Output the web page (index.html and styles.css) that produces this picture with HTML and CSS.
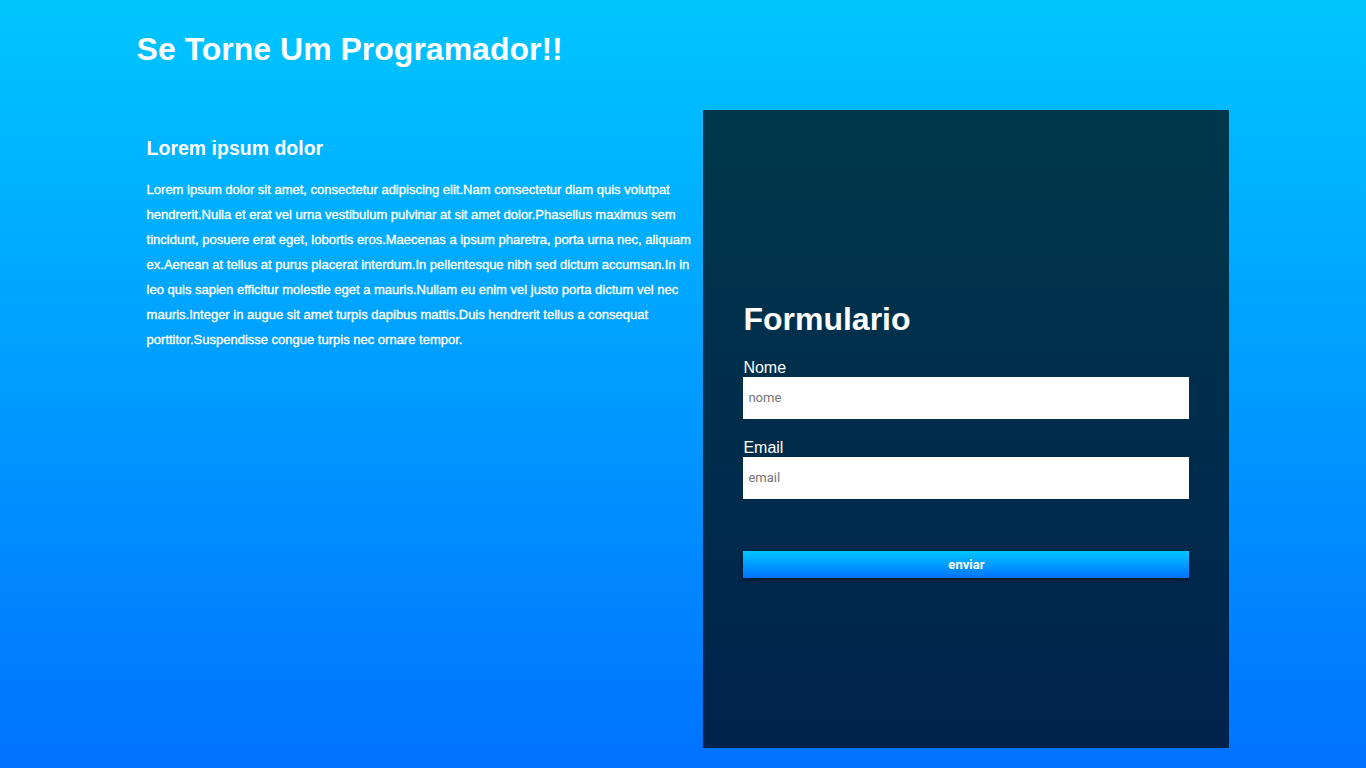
FILE: index.html
```html
<!DOCTYPE html>
<html lang="pt">
<head>
<meta charset="utf-8">
<title>Se Torne Um Programador!!</title>
<link rel="stylesheet" href="styles.css">
</head>
<body>
<div class="page">
  <header class="header">
    <h1 class="title">Se Torne Um Programador!!</h1>
  </header>
  <main class="content">
    <section class="about">
      <h2 class="about-title">Lorem ipsum dolor</h2>
      <p class="about-text">Lorem ipsum dolor sit amet, consectetur adipiscing elit.Nam consectetur diam quis volutpat hendrerit.Nulla et erat vel urna vestibulum pulvinar at sit amet dolor.Phasellus maximus sem tincidunt, posuere erat eget, lobortis eros.Maecenas a ipsum pharetra, porta urna nec, aliquam ex.Aenean at tellus at purus placerat interdum.In pellentesque nibh sed dictum accumsan.In in leo quis sapien efficitur molestie eget a mauris.Nullam eu enim vel justo porta dictum vel nec mauris.Integer in augue sit amet turpis dapibus mattis.Duis hendrerit tellus a consequat porttitor.Suspendisse congue turpis nec ornare tempor.</p>
    </section>
    <aside class="panel">
      <form class="form">
        <h1 class="form-title">Formulario</h1>
        <label class="label" for="nome">Nome</label>
        <input class="input" id="nome" type="text" placeholder="nome">
        <label class="label label-gap" for="email">Email</label>
        <input class="input" id="email" type="email" placeholder="email">
        <button class="button" type="button">enviar</button>
      </form>
    </aside>
  </main>
</div>
</body>
</html>
```

FILE: styles.css
```css
html, body {
  margin: 0;
  padding: 0;
}

body {
  font-family: "Liberation Sans", Arial, sans-serif;
  color: #fff;
  background: linear-gradient(to bottom, #00c6ff, #0072ff);
  min-height: 100vh;
}

.page {
  width: 80%;
  margin: 0 auto;
  min-height: 100vh;
  display: flex;
  flex-direction: column;
  box-sizing: border-box;
  padding-bottom: 20px;
}

.header {
  height: 110px;
  padding-top: 31px;
  box-sizing: border-box;
}

.title {
  margin: 0;
  font-size: 32px;
  font-weight: bold;
}

.content {
  flex: 1;
  display: grid;
  grid-template-columns: 1fr 526px;
}

.about {
  padding: 10px;
}

.about-title {
  margin: 17px 0 0;
  font-size: 19.5px;
  font-weight: bold;
  line-height: 23px;
}

.about-text {
  margin: 17px 0 0;
  font-family: "Liberation Sans", Arial, sans-serif;
  font-size: 13px;
  font-weight: normal;
  line-height: 25px;
  -webkit-text-stroke: 0.35px #fff;
}

.panel {
  background: rgba(0, 0, 0, 0.7);
  padding: 0 40px;
  display: flex;
  flex-direction: column;
  justify-content: center;
}

.form {
  display: flex;
  flex-direction: column;
}

.form-title {
  font-size: 32px;
  font-weight: bold;
  line-height: 37px;
  margin: 20.44px 0 21.44px;
}

.label {
  font-size: 16px;
  line-height: 18px;
}

.label-gap {
  margin-top: 20px;
}

.input {
  height: 42px;
  box-sizing: border-box;
  border: none;
  outline: none;
  padding: 0 5px;
  font-family: Roboto, "Liberation Sans", sans-serif;
  font-size: 13px;
  color: #333;
  background: #fff;
}

.input::placeholder {
  color: #757575;
}

.button {
  margin-top: 52px;
  height: 27px;
  border: none;
  color: #fff;
  font-family: Roboto, "Liberation Sans", sans-serif;
  font-size: 13px;
  font-weight: bold;
  background: linear-gradient(to bottom, #00c6ff, #0072ff);
  box-shadow: 0 2px 3px rgba(0, 0, 0, 0.5);
  cursor: pointer;
}
```
